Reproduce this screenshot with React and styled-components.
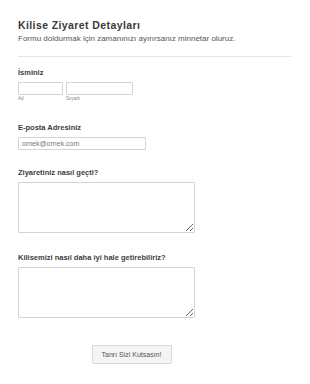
import React from 'react';
import styled, { createGlobalStyle } from 'styled-components';

const GlobalStyle = createGlobalStyle`
    body {
        margin: 0;
        background: #fff;
        font-family: "Liberation Sans", Arial, sans-serif;
    }
`;

const Page = styled.div`
    width: 310px;
    padding: 19px 18px 0 18px;
    box-sizing: border-box;
`;

const Header = styled.div`
    padding-bottom: 12px;
    border-bottom: 1px solid #e6e6e6;
    margin-right: 1px;
`;

const Title = styled.div`
    font-size: 10.5px;
    font-weight: bold;
    letter-spacing: 0.4px;
    color: #3a3a3a;
    line-height: 13px;
`;

const Subtitle = styled.div`
    font-size: 8px;
    color: #555;
    line-height: 11px;
    margin-top: 1px;
`;

const Field = styled.div`
    margin-top: ${p => p.top}px;
`;

const Label = styled.div`
    font-size: 7.5px;
    font-weight: bold;
    color: #3c3c3c;
    line-height: 9px;
    margin-bottom: 5px;
`;

const NameRow = styled.div`
    display: flex;
    gap: 3px;
`;

const NameCol = styled.div`
    display: flex;
    flex-direction: column;
`;

const Input = styled.input`
    box-sizing: border-box;
    width: ${p => p.w}px;
    height: 13px;
    border: 1px solid #d4d4d4;
    border-radius: 1px;
    padding: 0 3px;
    font-family: inherit;
    font-size: 7px;
    color: #666;
    outline: none;
    display: block;
    &::placeholder {
        color: #777;
    }
`;

const SubLabel = styled.span`
    font-size: 4.5px;
    color: #888;
    line-height: 6px;
    margin-top: 1px;
`;

const TextArea = styled.textarea`
    box-sizing: border-box;
    display: block;
    width: 177px;
    height: 51px;
    border: 1px solid #d4d4d4;
    border-radius: 1px;
    font-family: inherit;
    outline: none;
    resize: vertical;
`;

const Footer = styled.div`
    display: flex;
    justify-content: center;
    padding-right: 47px;
    margin-top: 27px;
`;

const Button = styled.button`
    height: 19px;
    width: 80px;
    background: #f4f4f4;
    border: 1px solid #d8d8d8;
    border-radius: 1px;
    font-family: inherit;
    font-size: 7px;
    color: #555;
    padding: 0;
`;

export default function App() {
    return (
        <>
            <GlobalStyle />
            <Page>
                <Header>
                    <Title>Kilise Ziyaret Detayları</Title>
                    <Subtitle>Formu doldurmak için zamanınızı ayırırsanız minnetar oluruz.</Subtitle>
                </Header>
                <Field top={11}>
                    <Label>İsminiz</Label>
                    <NameRow>
                        <NameCol>
                            <Input w={45} />
                            <SubLabel>Ad</SubLabel>
                        </NameCol>
                        <NameCol>
                            <Input w={67} />
                            <SubLabel>Soyadı</SubLabel>
                        </NameCol>
                    </NameRow>
                </Field>
                <Field top={21}>
                    <Label>E-posta Adresiniz</Label>
                    <Input w={128} placeholder="ornek@ornek.com" />
                </Field>
                <Field top={18}>
                    <Label>Ziyaretiniz nasıl geçti?</Label>
                    <TextArea />
                </Field>
                <Field top={20}>
                    <Label>Kilisemizi nasıl daha iyi hale getirebiliriz?</Label>
                    <TextArea />
                </Field>
                <Footer>
                    <Button>Tanrı Sizi Kutsasın!</Button>
                </Footer>
            </Page>
        </>
    );
}
